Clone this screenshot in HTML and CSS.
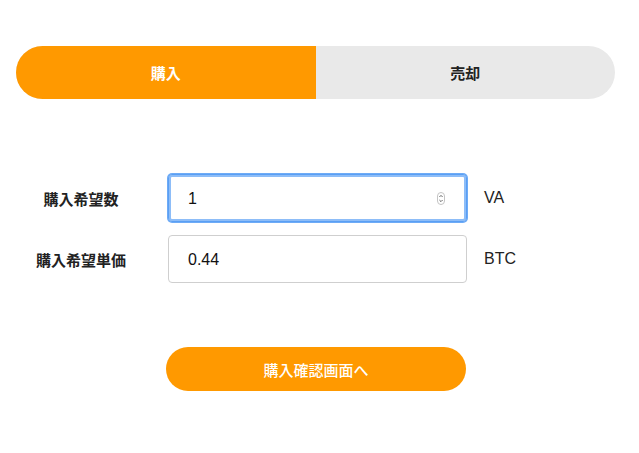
FILE: index.html
```html
<!DOCTYPE html>
<html lang="ja">
<head>
<meta charset="UTF-8">
<meta name="viewport" content="width=device-width, initial-scale=1.0">
<title>購入</title>
<link rel="stylesheet" href="styles.css">
</head>
<body>
    <div class="page">
        <div class="tabs">
            <div class="tab tab-active">購入</div>
            <div class="tab">売却</div>
        </div>

        <form class="order-form">
            <div class="form-row">
                <label class="form-label" for="cantidad">購入希望数</label>
                <div class="field field-focus">
                    <input class="field-input" type="text" id="cantidad" value="1">
                    <span class="spinner">
                        <svg width="8" height="13" viewBox="0 0 8 13">
                            <rect x="0.5" y="0.5" width="7" height="12" rx="3.5" fill="#fff" stroke="#c4c4c4"/>
                            <path d="M2.4 5 L4 3.4 L5.6 5" fill="none" stroke="#555" stroke-width="0.9"/>
                            <path d="M2.4 8 L4 9.6 L5.6 8" fill="none" stroke="#555" stroke-width="0.9"/>
                        </svg>
                    </span>
                </div>
                <span class="unit">VA</span>
            </div>
            <div class="form-row">
                <label class="form-label" for="precio">購入希望単価</label>
                <div class="field">
                    <input class="field-input" type="text" id="precio" value="0.44">
                </div>
                <span class="unit">BTC</span>
            </div>

            <button type="button" class="confirm-btn">購入確認画面へ</button>
        </form>
    </div>
</body>
</html>
```

FILE: styles.css
```css
body {
    margin: 0;
    padding: 0;
    background: #fff;
    font-family: "Liberation Sans", "Noto Sans CJK JP", sans-serif;
    color: #222;
}
.page {
    width: 599px;
    padding: 46px 0 0 16px;
}

/* pestañas compra / venta */
.tabs {
    display: flex;
    height: 53px;
    border-radius: 27px;
    overflow: hidden;
    background: #e9e9e9;
}
.tab {
    flex: 1;
    display: flex;
    align-items: center;
    justify-content: center;
    font-size: 15px;
    font-weight: bold;
    color: #222;
}
.tab-active {
    background: #ff9900;
    color: #fff;
}

/* formulario */
.order-form {
    margin-top: 75px;
    display: flex;
    flex-direction: column;
    gap: 13px;
}
.form-row {
    display: flex;
    align-items: center;
}
.form-label {
    width: 130px;
    margin-right: 22px;
    text-align: center;
    font-size: 15px;
    font-weight: bold;
    color: #222;
}
.field {
    position: relative;
    width: 299px;
    height: 48px;
    box-sizing: border-box;
    border: 1px solid #cfcfcf;
    border-radius: 4px;
    background: #fff;
}
.field-focus {
    border-color: #5a9ff4;
    box-shadow: 0 0 0 1px #6eabf6, inset 0 0 0 2px #8dbdf8;
}
.field-input {
    width: 100%;
    height: 100%;
    box-sizing: border-box;
    border: none;
    outline: none;
    background: transparent;
    padding: 2px 19px 0;
    font-family: "Liberation Sans", sans-serif;
    font-size: 16px;
    color: #111;
}
.spinner {
    position: absolute;
    right: 21px;
    top: 17px;
    line-height: 0;
}
.unit {
    margin-left: 17px;
    font-size: 16px;
    color: #222;
}

.confirm-btn {
    align-self: center;
    margin-top: 51px;
    margin-left: 1px;
    width: 300px;
    height: 44px;
    border: none;
    border-radius: 22px;
    background: #ff9900;
    color: #fff;
    font-family: "Noto Sans CJK JP", sans-serif;
    font-size: 15px;
    font-weight: 500;
    cursor: pointer;
}
```
